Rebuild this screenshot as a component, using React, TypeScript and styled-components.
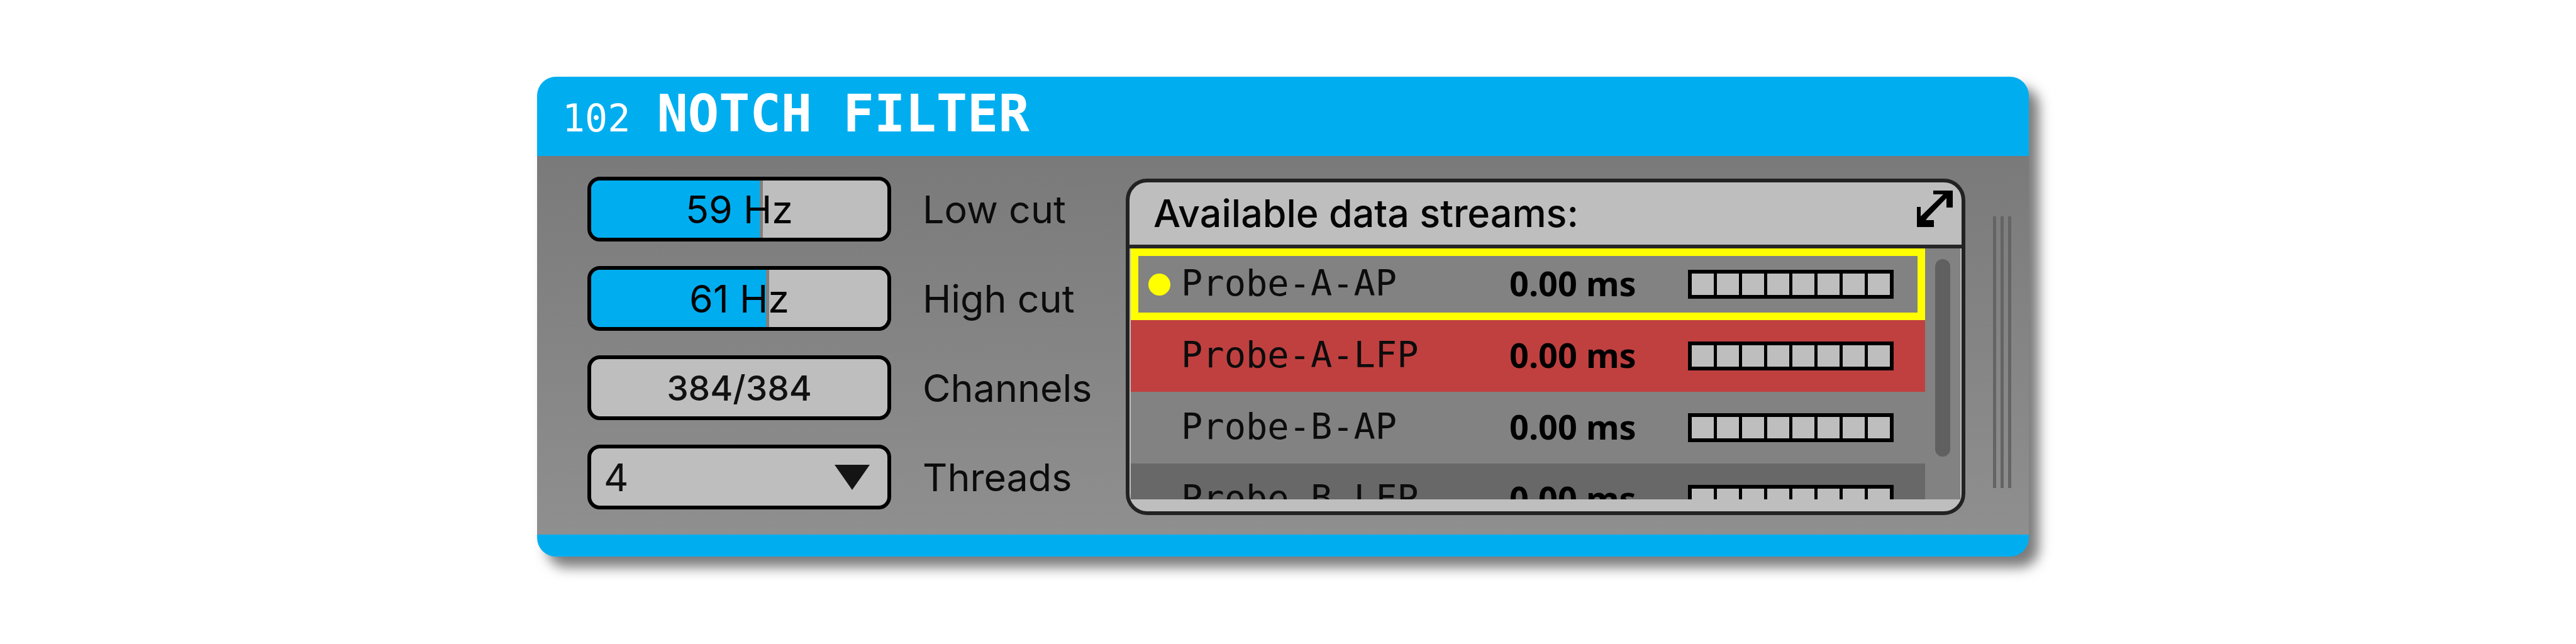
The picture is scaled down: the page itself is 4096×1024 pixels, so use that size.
import React, { useId, useState } from "react";
import styled, { createGlobalStyle } from "styled-components";

const sans = `Inter, "Liberation Sans", sans-serif`;
const mono = `"DejaVu Sans Mono", monospace`;
const accent = "#00aef0";
const surface = "#bebebe";

const GlobalStyle = createGlobalStyle`
  * { box-sizing: border-box; }
  body { margin: 0; background: #fff; overflow: hidden; }
`;

const Page = styled.main`
  padding: 122px 870px 139px 854px;
  font-family: ${sans};
`;

const Card = styled.section`
  border-radius: 30px;
  background: ${accent};
  box-shadow: 16px 17px 20px rgba(0, 0, 0, 0.52);
  padding-bottom: 35px;
`;

const Header = styled.header`
  display: flex;
  align-items: baseline;
  gap: 42px;
  height: 126px;
  padding: 14px 40px 0;
  color: #fff;
`;

const NodeId = styled.span`
  font: 400 60px/80px ${mono};
`;

const Title = styled.h1`
  margin: 0;
  font: 700 82px/90px ${mono};
`;

const Body = styled.div`
  display: flex;
  height: 602px;
  padding: 33px 28px 0 80px;
  background: linear-gradient(#7a7a7a, #8f8f8f);
`;

const Settings = styled.div`
  display: grid;
  grid-template-columns: 483px 1fr;
  grid-auto-rows: 103px;
  row-gap: 39px;
  column-gap: 50px;
  align-items: center;
  align-content: start;
  flex: 0 0 856px;
`;

const Caption = styled.label`
  font-size: 61px;
  line-height: 72px;
  color: #0c0c0c;
`;

const Field = styled.div`
  display: grid;
  height: 103px;
  border: 6px solid #000;
  border-radius: 20px;
  overflow: hidden;
  background: ${surface};
  > * { grid-area: 1 / 1; }
`;

const Range = styled.input`
  appearance: none;
  width: 100%;
  height: 100%;
  margin: 0;
  background: linear-gradient(
    to right,
    ${accent} var(--fill),
    #808080 var(--fill),
    #808080 calc(var(--fill) + 5px),
    ${surface} calc(var(--fill) + 5px)
  );
  &::-webkit-slider-thumb {
    appearance: none;
    width: 5px;
    height: 91px;
    background: transparent;
  }
`;

const Readout = styled.output`
  place-self: center;
  font-size: 61px;
  line-height: 72px;
  color: #050505;
  pointer-events: none;
`;

const ChannelButton = styled.button`
  height: 103px;
  padding: 0;
  border: 6px solid #000;
  border-radius: 20px;
  background: ${surface};
  color: #111;
  font: 500 55px/72px ${sans};
`;

const Select = styled.select`
  appearance: none;
  width: 100%;
  padding: 0 20px;
  border: 0;
  background: transparent;
  color: #111;
  font: 400 61px/72px ${sans};
`;

const Arrow = styled.svg`
  place-self: center end;
  width: 56px;
  height: 40px;
  margin-right: 28px;
  pointer-events: none;
`;

const Panel = styled.section`
  flex: 1;
  height: 535px;
  margin-top: 3px;
  border: 6px solid #222;
  border-radius: 34px;
  background: ${surface};
  overflow: hidden;
`;

const PanelHead = styled.div`
  display: flex;
  justify-content: space-between;
  height: 105px;
  padding: 13px 14px 0 38px;
  border-bottom: 6px solid #262626;
`;

const PanelTitle = styled.h2`
  margin: 0;
  font: 500 61px/72px ${sans};
  color: #050505;
`;

const ExpandButton = styled.button`
  width: 57px;
  height: 58px;
  padding: 0;
  border: 0;
  background: none;
  svg { display: block; width: 57px; height: 58px; }
`;

const Viewport = styled.div`
  display: flex;
  height: 399px;
  margin: 0 2px;
  overflow: hidden;
  background: #828282;
`;

const Streams = styled.table`
  flex: 1;
  height: 456px;
  border-collapse: collapse;
  table-layout: fixed;
  td { padding: 0; text-align: left; }
`;

const rowColors = { plain: "#828282", alert: "#c04040", dim: "#686868" };

const StreamRow = styled.tr<{ $tone: keyof typeof rowColors; $selected?: boolean }>`
  height: 114px;
  background: ${(p) => rowColors[p.$tone]};
  ${(p) => p.$selected && "outline: 12px solid #ff0; outline-offset: -12px;"}
`;

const MarkCell = styled.td`
  width: 80px;
`;

const Dot = styled.span`
  display: block;
  width: 35px;
  height: 35px;
  margin-left: 28px;
  border-radius: 50%;
  background: #ff0;
`;

const NameCell = styled.td`
  width: 522px;
  font: 400 57px/70px ${mono};
  color: #0c0c0c;
  && { padding-bottom: 4px; }
`;

const DelayCell = styled.td`
  width: 284px;
  font: 700 54px/70px "Noto Sans", sans-serif;
  color: #000;
  && { padding-bottom: 4px; }
`;

const Meter = styled.div`
  display: grid;
  grid-template-columns: repeat(8, 1fr);
  gap: 5px;
  width: 327px;
  height: 46px;
  border: 6px solid #000;
  background: #000;
`;

const Cell = styled.span`
  background: ${surface};
`;

const Scrollbar = styled.div`
  width: 56px;
  padding: 17px 16px 0;
`;

const Thumb = styled.div`
  height: 314px;
  border-radius: 12px;
  background: #606060;
`;

const Grip = styled.div`
  display: flex;
  gap: 7px;
  height: 432px;
  margin: 63px 0 0 44px;
`;

const GripLine = styled.span`
  width: 5px;
  background: #646464;
`;

const streams: { name: string; tone: keyof typeof rowColors; selected?: boolean }[] = [
  { name: "Probe-A-AP", tone: "plain", selected: true },
  { name: "Probe-A-LFP", tone: "alert" },
  { name: "Probe-B-AP", tone: "plain" },
  { name: "Probe-B-LFP", tone: "dim" },
];

function CutSlider({ label, start, offset }: { label: string; start: number; offset: number }) {
  const id = useId();
  const [value, setValue] = useState(start);
  return (
    <>
      <Field>
        <Range
          id={id}
          type="range"
          min={0}
          max={100}
          value={value}
          onChange={(e) => setValue(Number(e.target.value))}
          style={{ "--fill": `${value - offset}%` } as React.CSSProperties}
        />
        <Readout htmlFor={id}>{value} Hz</Readout>
      </Field>
      <Caption htmlFor={id}>{label}</Caption>
    </>
  );
}

export default function App() {
  return (
    <>
      <GlobalStyle />
      <Page>
        <Card>
          <Header>
            <NodeId>102</NodeId>
            <Title>NOTCH FILTER</Title>
          </Header>
          <Body>
            <Settings>
              <CutSlider label="Low cut" start={59} offset={2} />
              <CutSlider label="High cut" start={61} offset={2} />
              <ChannelButton id="channels" type="button">384/384</ChannelButton>
              <Caption htmlFor="channels">Channels</Caption>
              <Field>
                <Select id="threads" defaultValue="4">
                  <option>1</option>
                  <option>2</option>
                  <option>4</option>
                  <option>8</option>
                </Select>
                <Arrow viewBox="0 0 56 40">
                  <path d="M0 0h56L28 40z" fill="#141414" />
                </Arrow>
              </Field>
              <Caption htmlFor="threads">Threads</Caption>
            </Settings>
            <Panel>
              <PanelHead>
                <PanelTitle>Available data streams:</PanelTitle>
                <ExpandButton type="button" aria-label="Expand">
                  <svg viewBox="0 0 57 58">
                    <path d="M26 0H57V27H47V12L18 42L14 47H27V58H0V26H6V41L42 6H26Z" />
                  </svg>
                </ExpandButton>
              </PanelHead>
              <Viewport>
                <Streams>
                  <tbody>
                    {streams.map((s) => (
                      <StreamRow key={s.name} $tone={s.tone} $selected={s.selected}>
                        <MarkCell>{s.selected && <Dot />}</MarkCell>
                        <NameCell>{s.name}</NameCell>
                        <DelayCell>0.00 ms</DelayCell>
                        <td>
                          <Meter>
                            {Array.from({ length: 8 }, (_, i) => <Cell key={i} />)}
                          </Meter>
                        </td>
                      </StreamRow>
                    ))}
                  </tbody>
                </Streams>
                <Scrollbar><Thumb /></Scrollbar>
              </Viewport>
            </Panel>
            <Grip>
              <GripLine />
              <GripLine />
              <GripLine />
            </Grip>
          </Body>
        </Card>
      </Page>
    </>
  );
}
